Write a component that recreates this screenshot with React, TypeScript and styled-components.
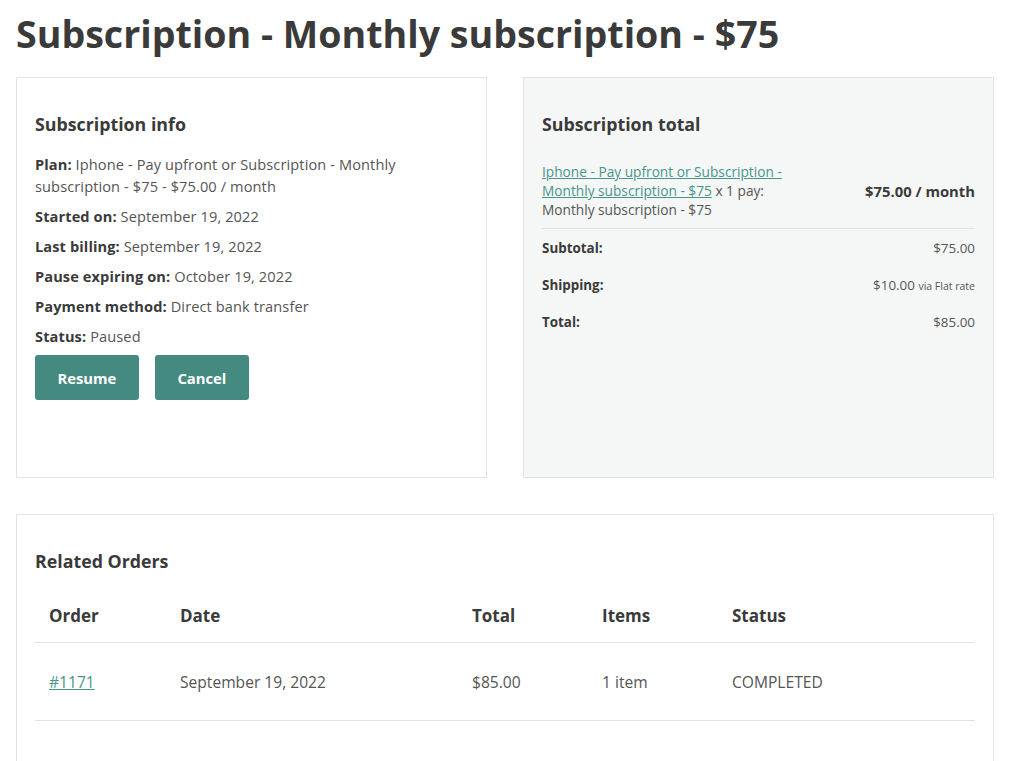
import React from 'react'
import styled, { createGlobalStyle } from 'styled-components'

const colors = {
  text: '#3a3a3a',
  muted: '#555555',
  teal: '#458a80',
  link: '#4a958a',
  border: '#e3e3e3',
  panel: '#f5f7f6',
}

const GlobalStyle = createGlobalStyle`
  html, body {
    margin: 0;
    padding: 0;
    background: #ffffff;
  }
  body {
    font-family: "Open Sans", "Liberation Sans", sans-serif;
    color: ${colors.text};
  }
`

const Page = styled.div`
  padding: 11px 30px 0 16px;
`

const Title = styled.h1`
  margin: 0 0 20px;
  font-size: 37.6px;
  line-height: 46px;
  font-weight: 700;
  color: ${colors.text};
`

const Columns = styled.div`
  display: grid;
  grid-template-columns: 1fr 1fr;
  gap: 36px;
  margin-bottom: 36px;
`

const Box = styled.section<{ $shaded?: boolean }>`
  box-sizing: border-box;
  min-height: 401px;
  border: 1.5px solid ${colors.border};
  background: ${(p) => (p.$shaded ? colors.panel : '#ffffff')};
  padding: 34px 18px 30px;
`

const BoxTitle = styled.h2`
  margin: 0;
  font-size: 17.8px;
  line-height: 24px;
  font-weight: 700;
  color: ${colors.text};
`

const InfoList = styled.div`
  margin-top: 17px;
  display: flex;
  flex-direction: column;
  gap: 8px;
`

const InfoLine = styled.p`
  margin: 0;
  font-size: 14.6px;
  line-height: 22px;
  letter-spacing: 0.1px;
  color: ${colors.muted};
  strong {
    color: ${colors.text};
    font-weight: 700;
  }
`

const Actions = styled.div`
  margin-top: 8px;
  display: flex;
  gap: 16px;
`

const Button = styled.button`
  height: 45px;
  padding: 0 22.5px;
  border: none;
  border-radius: 3px;
  background: ${colors.teal};
  color: #ffffff;
  font-family: inherit;
  font-size: 14.8px;
  font-weight: 700;
  cursor: pointer;
`

const ItemRow = styled.div`
  margin-top: 26px;
  display: flex;
  align-items: center;
  justify-content: space-between;
  padding-bottom: 9px;
  border-bottom: 1px solid ${colors.border};
`

const ItemName = styled.div`
  max-width: 250px;
  font-size: 13.7px;
  line-height: 19px;
  color: ${colors.muted};
  a {
    color: ${colors.link};
    text-decoration: underline;
  }
`

const ItemPrice = styled.div`
  font-size: 14.8px;
  font-weight: 700;
  color: ${colors.text};
`

const TotalRow = styled.div`
  height: 37px;
  display: flex;
  align-items: center;
  justify-content: space-between;
  font-size: 13.4px;
  color: ${colors.muted};
  strong {
    color: ${colors.text};
    font-weight: 700;
  }
  small {
    font-size: 10.5px;
  }
`

const OrdersBox = styled.section`
  border: 1.5px solid ${colors.border};
  padding: 34px 18px 40px;
`

const Table = styled.table`
  margin-top: 17px;
  width: 100%;
  table-layout: fixed;
  border-collapse: collapse;
`

const Th = styled.th<{ $width?: number }>`
  box-sizing: border-box;
  width: ${(p) => (p.$width ? `${p.$width}px` : 'auto')};
  text-align: left;
  padding: 14px 14px;
  font-size: 17px;
  line-height: 24px;
  font-weight: 700;
  color: ${colors.text};
  border-bottom: 1.5px solid ${colors.border};
`

const Td = styled.td`
  padding: 27px 14px 26px;
  font-size: 15.6px;
  line-height: 24px;
  color: ${colors.muted};
  border-bottom: 1.5px solid ${colors.border};
  a {
    color: ${colors.link};
    text-decoration: underline;
  }
`

const info = [
  { label: 'Started on:', value: 'September 19, 2022' },
  { label: 'Last billing:', value: 'September 19, 2022' },
  { label: 'Pause expiring on:', value: 'October 19, 2022' },
  { label: 'Payment method:', value: 'Direct bank transfer' },
  { label: 'Status:', value: 'Paused' },
]

const App: React.FC = () => {
  return (
    <>
      <GlobalStyle />
      <Page>
        <Title>Subscription - Monthly subscription - $75</Title>
        <Columns>
          <Box>
            <BoxTitle>Subscription info</BoxTitle>
            <InfoList>
              <InfoLine>
                <strong>Plan:</strong> Iphone - Pay upfront or Subscription - Monthly subscription - $75 - $75.00 / month
              </InfoLine>
              {info.map((row) => (
                <InfoLine key={row.label}>
                  <strong>{row.label}</strong> {row.value}
                </InfoLine>
              ))}
            </InfoList>
            <Actions>
              <Button>Resume</Button>
              <Button>Cancel</Button>
            </Actions>
          </Box>
          <Box $shaded>
            <BoxTitle>Subscription total</BoxTitle>
            <ItemRow>
              <ItemName>
                <a href="#">Iphone - Pay upfront or Subscription - Monthly subscription - $75</a> x 1 pay: Monthly subscription - $75
              </ItemName>
              <ItemPrice>$75.00 / month</ItemPrice>
            </ItemRow>
            <TotalRow>
              <strong>Subtotal:</strong>
              <span>$75.00</span>
            </TotalRow>
            <TotalRow>
              <strong>Shipping:</strong>
              <span>
                $10.00 <small>via Flat rate</small>
              </span>
            </TotalRow>
            <TotalRow>
              <strong>Total:</strong>
              <span>$85.00</span>
            </TotalRow>
          </Box>
        </Columns>
        <OrdersBox>
          <BoxTitle>Related Orders</BoxTitle>
          <Table>
            <thead>
              <tr>
                <Th $width={131}>Order</Th>
                <Th $width={292}>Date</Th>
                <Th $width={130}>Total</Th>
                <Th $width={130}>Items</Th>
                <Th>Status</Th>
              </tr>
            </thead>
            <tbody>
              <tr>
                <Td>
                  <a href="#">#1171</a>
                </Td>
                <Td>September 19, 2022</Td>
                <Td>$85.00</Td>
                <Td>1 item</Td>
                <Td>COMPLETED</Td>
              </tr>
            </tbody>
          </Table>
        </OrdersBox>
      </Page>
    </>
  )
}

export default App
